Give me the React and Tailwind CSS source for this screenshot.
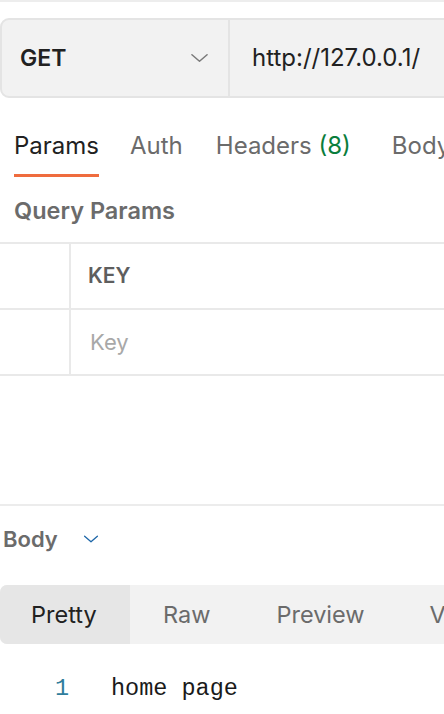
import React from 'react';

const Chevron = ({ className }) => (
  <svg className={className} viewBox="0 0 18 10" fill="none" stroke="currentColor" strokeWidth="1.6" strokeLinecap="round" strokeLinejoin="round">
    <path d="M1 1.5l8 7 8-7" />
  </svg>
);

const tabGap = ['', 'ml-[31px]', 'ml-[33px]', 'ml-[41px]'];

const App = () => {
  const tabs = ['Params', 'Auth', 'Headers', 'Body'];

  return (
    <div className="w-[444px] h-[714px] overflow-hidden bg-white text-[#212121]" style={{ fontFamily: 'Inter, "Noto Sans", sans-serif' }}>
      <div className="h-[2px] bg-[#ededed]" />

      {/* request bar */}
      <div className="mt-[16px] flex h-[80px] w-[470px] rounded-l-[9px] border-2 border-[#e4e4e4] bg-[#f2f2f2]">
        <div className="flex w-[228px] shrink-0 items-center justify-between border-r-2 border-[#e4e4e4] pl-[18px] pr-[20px]">
          <span className="text-[23px] font-semibold text-[#212121]">GET</span>
          <Chevron className="h-[10px] w-[17px] text-[#7a7a7a]" />
        </div>
        <div className="flex shrink-0 items-center pl-[22px] text-[24px] text-[#212121]">http://127.0.0.1/</div>
      </div>

      {/* tabs */}
      <div className="mt-[33px] flex whitespace-nowrap pl-[14px]">
        {tabs.map((t, i) => (
          <div key={t} className={`shrink-0 ${tabGap[i]}`}>
            <div className={`text-[24px] leading-[30px] ${i === 0 ? 'text-[#212121]' : 'text-[#6b6b6b]'}`}>
              {t}
              {t === 'Headers' && <span className="text-[#0a7d3c]"> (8)</span>}
            </div>
            <div className={`mt-[13px] h-[3px] ${i === 0 ? 'bg-[#ef6c3e]' : 'bg-transparent'}`} />
          </div>
        ))}
      </div>

      <div className="mt-[19px] pl-[14px] text-[23.5px] font-semibold leading-[30px] text-[#6b6b6b]">Query Params</div>

      {/* table */}
      <div className="mt-[16px] border-t-2 border-[#e9e9e9]">
        <div className="flex h-[66px] border-b-2 border-[#e9e9e9]">
          <div className="w-[71px] shrink-0 border-r-2 border-[#e9e9e9]" />
          <div className="flex items-center pl-[17px] text-[21px] font-semibold text-[#5e5e5e]">KEY</div>
        </div>
        <div className="flex h-[66px] border-b-2 border-[#e9e9e9]">
          <div className="w-[71px] shrink-0 border-r-2 border-[#e9e9e9]" />
          <div className="flex items-center pl-[19px] text-[22px] text-[#a8a8a8]">Key</div>
        </div>
      </div>

      {/* response */}
      <div className="mt-[128px] h-[2px] bg-[#ececec]" />
      <div className="mt-[18px] flex h-[30px] items-center pl-[3px]">
        <span className="text-[22px] font-semibold text-[#6b6b6b]">Body</span>
        <Chevron className="ml-[24px] h-[8px] w-[18px] text-[#1d66a8]" />
      </div>

      <div className="mt-[31px] flex h-[59px] w-[500px] items-center overflow-hidden rounded-l-[7px] bg-[#f2f2f2] text-[23.5px] text-[#6b6b6b] whitespace-nowrap">
        <div className="flex h-full w-[130px] shrink-0 items-center bg-[#e6e6e6] pl-[31px] text-[#212121]">Pretty</div>
        <div className="shrink-0 pl-[33px]">Raw</div>
        <div className="shrink-0 pl-[66px]">Preview</div>
        <div className="shrink-0 pl-[65px]">View</div>
      </div>

      <div className="mt-[30px] flex items-center text-[23.5px] leading-[30px]" style={{ fontFamily: '"Liberation Mono", "DejaVu Sans Mono", monospace' }}>
        <span className="w-[111px] shrink-0 pl-[55px] text-[#2f7d9c]">1</span>
        <span className="text-[#1a1a1a]">home page</span>
      </div>
    </div>
  );
};

export default App;
